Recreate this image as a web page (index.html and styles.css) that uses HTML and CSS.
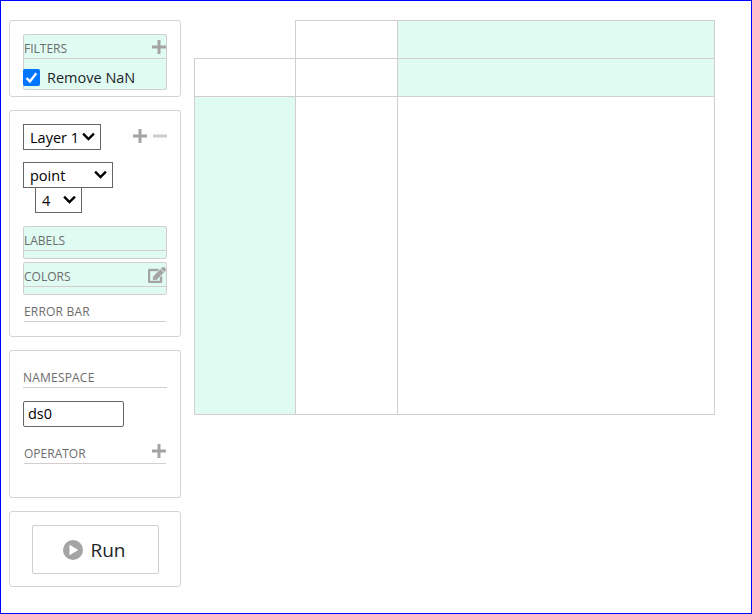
FILE: index.html
```html
<!DOCTYPE html>
<html lang="en">
<head>
<meta charset="utf-8">
<title>Plot builder</title>
<link rel="stylesheet" href="styles.css">
</head>
<body>
<div class="app">
  <aside class="sidebar">
    <section class="panel panel-filters">
      <div class="drop drop-filters">
        <div class="head"><span>FILTERS</span>
          <svg class="icon" viewBox="0 0 14 14"><path d="M5.500 0h3v5.500H14v3H8.500V14h-3V8.500H0v-3h5.500z"/></svg></div>
        <label class="check"><span class="box"><svg viewBox="0 0 16 16"><path d="M3.300 8.500l3.200 3.200 6-7.700"/></svg></span><span>Remove NaN</span></label>
      </div>
    </section>
    <section class="panel panel-layer">
      <div class="layer-row">
        <div class="select sel-layer"><span>Layer 1</span><svg class="chev" viewBox="0 0 12 8"><path d="M1 1.300l5 5 5-5"/></svg></div>
        <div class="tools">
          <svg class="icon" viewBox="0 0 14 14"><path d="M5.500 0h3v5.500H14v3H8.500V14h-3V8.500H0v-3h5.500z"/></svg>
          <svg class="icon faded" viewBox="0 0 14 14"><path d="M0 5.500h14v3H0z"/></svg>
        </div>
      </div>
      <div class="select sel-mark"><span>point</span><svg class="chev" viewBox="0 0 12 8"><path d="M1 1.300l5 5 5-5"/></svg></div>
      <div class="select sel-size"><span>4</span><svg class="chev" viewBox="0 0 12 8"><path d="M1 1.300l5 5 5-5"/></svg></div>
      <div class="drop drop-labels"><div class="head low"><span>LABELS</span></div></div>
      <div class="drop drop-colors"><div class="head"><span>COLORS</span>
        <svg class="edit" viewBox="0 0 576 512"><path d="M402.600 83.200l90.200 90.200c3.800 3.800 3.800 10 0 13.800L274.400 405.600l-92.800 10.300c-12.400 1.400-22.900-9.100-21.500-21.500l10.300-92.800L388.800 83.200c3.800-3.800 10-3.800 13.800 0zm162-22.900l-48.800-48.800c-15.200-15.200-39.900-15.200-55.200 0l-35.400 35.400c-3.800 3.800-3.800 10 0 13.800l90.200 90.200c3.800 3.800 10 3.800 13.800 0l35.400-35.400c15.200-15.300 15.200-40 0-55.200zM384 346.200V448H64V128h229.800c3.200 0 6.200-1.300 8.500-3.500l40-40c7.600-7.600 2.200-20.500-8.500-20.500H48C21.500 64 0 85.500 0 112v352c0 26.500 21.500 48 48 48h352c26.500 0 48-21.500 48-48V306.200c0-10.700-12.900-16-20.500-8.500l-40 40c-2.200 2.300-3.500 5.300-3.500 8.500z"/></svg></div></div>
      <div class="head plain head-error"><span class="wide">ERROR BAR</span></div>
    </section>
    <section class="panel panel-data">
      <div class="head low"><span class="wide">NAMESPACE</span></div>
      <div class="field"><span>ds0</span></div>
      <div class="head plain low head-op"><span>OPERATOR</span>
        <svg class="icon" viewBox="0 0 14 14"><path d="M5.500 0h3v5.500H14v3H8.500V14h-3V8.500H0v-3h5.500z"/></svg></div>
    </section>
    <section class="panel panel-run">
      <button class="run"><svg viewBox="0 0 20 20"><circle cx="10" cy="10" r="10"/><path d="M6.500 4.800v10.400L15.300 10z"/></svg><span>Run</span></button>
    </section>
  </aside>
  <main class="board">
    <div class="empty"></div><div class="cell top"></div><div class="cell mint top"></div>
    <div class="cell left"></div><div class="cell"></div><div class="cell mint"></div>
    <div class="cell left mint"></div><div class="cell"></div><div class="cell"></div>
  </main>
</div>
</body>
</html>
```

FILE: styles.css
```css
* { box-sizing: border-box; }
body { margin: 0; background: #fff; font-family: "Open Sans", "Noto Sans", sans-serif; color: #212529; }
.app { display: flex; align-items: flex-start; width: 752px; height: 614px; border: 1px solid #00f; padding: 19px 0 0 8px; }
.app span { white-space: nowrap; }
.sidebar { width: 172px; display: flex; flex-direction: column; gap: 13px; }
.panel { border: 1px solid #ced4da; border-radius: 3px; padding: 13px; }
.panel-filters { height: 77px; }
.panel-layer { height: 227px; }
.panel-data { height: 148px; }
.panel-run { height: 76px; padding: 13px 22px; }
.drop { width: 144px; background: #e0fbf2; border: 1px solid #d3cdcd; border-radius: 2px; }
.drop-filters { height: 56px; }
.head { display: flex; justify-content: space-between; align-items: center; height: 24px; border-bottom: 1px solid #d3cdcd; color: #6c6c6c; font-size: 12px; line-height: 16px; padding-top: 4px; }
.low { padding-top: 5px; }
.head .wide { letter-spacing: .2px; }
.icon { width: 14px; height: 14px; fill: #a4a4a4; margin-top: -4px; }
.low .icon { margin-top: -6px; }
.plain .icon { margin-right: 0; }
.faded { opacity: .55; }
.check { display: flex; align-items: center; margin-top: 10px; height: 17px; font-size: 14.500px; gap: 7px; }
.box { width: 17px; height: 17px; background: #0075ff; border-radius: 2px; display: flex; }
.box path { fill: none; stroke: #fff; stroke-width: 2.200; }
.layer-row { display: flex; justify-content: space-between; height: 38px; }
.tools { display: flex; gap: 6px; padding-top: 9px; }
.select { display: flex; align-items: center; justify-content: space-between; height: 26px; border: 1px solid #666; padding: 0 5px 0 6px; font-size: 14.500px; color: #000; }
.chev { width: 13px; height: 9px; fill: none; stroke: #000; stroke-width: 2.200; margin-top: -1px; flex: none; }
.sel-layer { width: 78px; }
.sel-mark { width: 90px; }
.sel-size { width: 47px; margin: -1px 0 0 12px; }
.check { margin-left: -1px; }
.drop-labels { height: 33px; margin-top: 13px; }
.drop-colors { height: 33px; margin-top: 3px; }
.edit { width: 18px; height: 16px; fill: #a4a4a4; stroke: #a4a4a4; stroke-width: 12px; margin-top: -4px; }
.plain { width: 142px; margin-left: 1px; }
.head-error { margin-top: 3px; }
.field { width: 101px; height: 26px; margin-top: 13px; border: 1px solid #666; border-radius: 2px; padding: 1px 0 0 4px; font-size: 14.500px; line-height: 22px; color: #000; }
.head-op { margin-top: 13px; }
.run { width: 127px; height: 49px; border: 1px solid #d3cdcd; border-radius: 2px; background: #fff; color: #212529; font: 19px "Open Sans", sans-serif; display: flex; align-items: center; justify-content: center; gap: 7px; padding: 0 2px 0 0; }
.run svg { width: 20px; height: 20px; fill: #a4a4a4; }
.run path { fill: #fff; }
.board { margin-left: 13px; display: grid; grid-template-columns: 102px 102px 317px; grid-template-rows: 39px 38px 318px; }
.cell { border: solid #d3cdcd; border-width: 0 1px 1px 0; }
.top { border-top-width: 1px; }
.left { border-left-width: 1px; }
.mint { background: #e0fbf2; }
.empty { border: solid #d3cdcd; border-width: 0 1px 1px 0; }
```
